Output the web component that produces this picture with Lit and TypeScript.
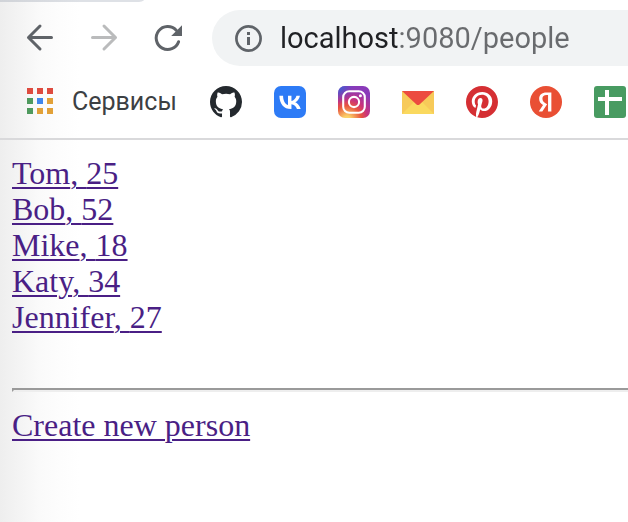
import { LitElement, html, css, svg } from "lit";
import { customElement, property } from "lit/decorators.js";

interface Bookmark {
  name: string;
  icon: unknown;
}

interface Person {
  name: string;
  age: number;
}

const backIcon = svg`<path d="M27.5 15.5H4.5M16 4L4.5 15.5L16 27" fill="none" stroke="currentColor" stroke-width="3" stroke-linecap="round" stroke-linejoin="round"/>`;
const forwardIcon = svg`<path d="M4.5 15.5H27.5M16 4L27.5 15.5L16 27" fill="none" stroke="currentColor" stroke-width="3" stroke-linecap="round" stroke-linejoin="round"/>`;
const reloadIcon = svg`
  <path d="M24.2 8.2A11.5 11.5 0 1 0 26.6 19.7" fill="none" stroke="currentColor" stroke-width="3" stroke-linecap="round"/>
  <path d="M30 3.2V14H19.2Z" fill="currentColor"/>`;
const infoIcon = svg`
  <circle cx="16.5" cy="16.5" r="12.1" fill="none" stroke="currentColor" stroke-width="2.7"/>
  <path d="M15 10h3v3h-3zM15 15h3v8h-3z" fill="currentColor"/>`;
const appsIcon = svg`
  <path d="M3 2h6v6H3zM13 2h6v6h-6zM23 2h6v6h-6z" fill="#de4b3f"/>
  <path d="M3 12h6v6H3zM3 22h6v6H3z" fill="#4f9a5e"/>
  <path d="M13 12h6v6h-6z" fill="#4086ec"/>
  <path d="M23 12h6v6h-6zM13 22h6v6h-6zM23 22h6v6h-6z" fill="#e2a138"/>`;

const bookmarks: Bookmark[] = [
  {
    name: "GitHub",
    icon: svg`<path transform="scale(2)" fill="#24292e" fill-rule="evenodd" d="M8 0C3.58 0 0 3.58 0 8c0 3.54 2.29 6.53 5.47 7.59.4.07.55-.17.55-.38 0-.19-.01-.82-.01-1.49-2.01.37-2.53-.49-2.69-.94-.09-.23-.48-.94-.82-1.13-.28-.15-.68-.52-.01-.53.63-.01 1.08.58 1.23.82.72 1.21 1.87.87 2.33.66.07-.52.28-.87.51-1.07-1.78-.2-3.64-.89-3.64-3.95 0-.87.31-1.59.82-2.15-.08-.2-.36-1.02.08-2.12 0 0 .67-.21 2.2.82.64-.18 1.32-.27 2-.27s1.36.09 2 .27c1.53-1.04 2.2-.82 2.2-.82.44 1.1.16 1.92.08 2.12.51.56.82 1.27.82 2.15 0 3.07-1.87 3.75-3.65 3.95.29.25.54.73.54 1.48 0 1.07-.01 1.93-.01 2.2 0 .21.15.46.55.38A8.01 8.01 0 0 0 16 8c0-4.42-3.58-8-8-8z"/>`,
  },
  {
    name: "VK",
    icon: svg`
      <rect width="32" height="32" rx="7" fill="#2d7bf6"/>
      <path transform="scale(.6667)" fill="#fff" d="M25.54 34.58c-10.94 0-17.18-7.5-17.44-19.98h5.48c.18 9.16 4.22 13.04 7.42 13.84V14.6h5.16v7.9c3.16-.34 6.48-3.94 7.6-7.9h5.16c-.86 4.88-4.46 8.48-7.02 9.96 2.56 1.2 6.66 4.34 8.22 10.02h-5.68c-1.22-3.8-4.26-6.74-8.28-7.14v7.14z"/>`,
  },
  {
    name: "Instagram",
    icon: svg`
      <defs>
        <radialGradient id="warm" gradientUnits="userSpaceOnUse" cx="9" cy="34" r="32">
          <stop offset="0" stop-color="#fbd872"/>
          <stop offset=".12" stop-color="#fbd068"/>
          <stop offset=".45" stop-color="#e8553f"/>
          <stop offset=".65" stop-color="#c9337c"/>
          <stop offset="1" stop-color="#8a3ab9"/>
        </radialGradient>
        <radialGradient id="cool" gradientUnits="userSpaceOnUse" cx="0" cy="0" r="18">
          <stop offset="0" stop-color="#3a66d8"/>
          <stop offset=".3" stop-color="#4b58cc" stop-opacity=".85"/>
          <stop offset="1" stop-color="#7a3fc0" stop-opacity="0"/>
        </radialGradient>
      </defs>
      <rect width="32" height="32" rx="7" fill="url(#warm)"/>
      <rect width="32" height="32" rx="7" fill="url(#cool)"/>
      <g fill="none" stroke="#fff" stroke-width="2.1">
        <rect x="5.2" y="5.2" width="21.6" height="21.6" rx="6"/>
        <circle cx="16" cy="16" r="5.1"/>
      </g>
      <circle cx="22.4" cy="9.7" r="1.5" fill="#fff"/>`,
  },
  {
    name: "Mail",
    icon: svg`
      <path d="M0 5h32v23H0z" fill="#f7ca59"/>
      <path d="M0 28L16 12L32 28z" fill="#fad95f"/>
      <path d="M0 5h32L17.5 18.4q-1.5 1.4-3 0z" fill="#ec4b3f"/>`,
  },
  {
    name: "Pinterest",
    icon: svg`
      <circle cx="16" cy="16" r="15" fill="#fff"/>
      <path transform="scale(1.3333)" fill="#d52f33" d="M12 0C5.373 0 0 5.372 0 12c0 5.084 3.163 9.426 7.627 11.174-.105-.949-.2-2.405.042-3.441.218-.937 1.407-5.965 1.407-5.965s-.359-.719-.359-1.782c0-1.668.967-2.914 2.171-2.914 1.023 0 1.518.769 1.518 1.69 0 1.029-.655 2.568-.994 3.995-.283 1.194.599 2.169 1.777 2.169 2.133 0 3.772-2.249 3.772-5.495 0-2.873-2.064-4.882-5.012-4.882-3.414 0-5.418 2.561-5.418 5.207 0 1.031.397 2.138.893 2.738a.36.36 0 0 1 .083.345l-.333 1.36c-.053.22-.174.267-.402.161-1.499-.698-2.436-2.889-2.436-4.649 0-3.785 2.75-7.262 7.929-7.262 4.163 0 7.398 2.967 7.398 6.931 0 4.136-2.607 7.464-6.227 7.464-1.216 0-2.359-.631-2.75-1.378l-.748 2.853c-.271 1.043-1.002 2.35-1.492 3.146C9.57 23.812 10.763 24 12 24c6.627 0 12-5.373 12-12 0-6.628-5.373-12-12-12z"/>`,
  },
  {
    name: "Yandex",
    icon: svg`
      <circle cx="16" cy="16" r="16" fill="#e94f34"/>
      <path transform="translate(-3.26 -3.2) scale(1.6)" fill="#fff" d="M13.32 7.666h-.924c-1.694 0-2.585.858-2.585 2.123 0 1.43.616 2.1 1.881 2.959l1.045.704-3.003 4.487H7.49l2.695-4.014c-1.55-1.111-2.42-2.19-2.42-4.015 0-2.288 1.595-3.85 4.62-3.85h3.003v11.868H13.32V7.666z"/>`,
  },
  {
    name: "Sheets",
    icon: svg`
      <rect width="32" height="32" rx="3" fill="#489b61"/>
      <path d="M11 4h4v7h13v4H15v14h-4V15H4v-4h7z" fill="#fff"/>`,
  },
];

const people: Person[] = [
  { name: "Tom", age: 25 },
  { name: "Bob", age: 52 },
  { name: "Mike", age: 18 },
  { name: "Katy", age: 34 },
  { name: "Jennifer", age: 27 },
];

const glyph = (content: unknown) =>
  html`<svg class="glyph" viewBox="0 0 32 32" aria-hidden="true">${content}</svg>`;

@customElement("browser-toolbar")
class BrowserToolbar extends LitElement {
  static styles = css`
    :host {
      display: block;
      font-family: Roboto, "Liberation Sans", sans-serif;
    }
    .glyph {
      display: block;
      flex: none;
      width: 32px;
      height: 32px;
    }
    .tab-edge {
      width: 144px;
      height: 2px;
      background: linear-gradient(90deg, #d0d3d8, #dee1e6 80px);
      border-bottom-right-radius: 8px 2px;
    }
    .nav {
      display: flex;
      align-items: center;
      gap: 28px;
      padding: 8px 0 19px 24px;
    }
    .tools {
      display: flex;
      gap: 32px;
    }
    .tool {
      flex: none;
      padding: 0;
      border: 0;
      background: none;
      color: #5f6368;
    }
    .tool:disabled {
      color: #babbbc;
    }
    .address {
      flex: 1;
      min-width: 0;
      display: flex;
      align-items: center;
      gap: 16px;
      padding: 8px 0 8px 20px;
      border-radius: 28px 0 0 28px;
      background: #f1f3f4;
      color: #5f6368;
    }
    .url {
      flex: 1;
      min-width: 0;
      height: 40px;
      padding: 0;
      border: 0;
      outline: 0;
      font: 29px/40px Roboto, "Liberation Sans", sans-serif;
      color: transparent;
      caret-color: #202124;
      background: linear-gradient(90deg, #202124 119px, #696b6e 119px);
      -webkit-background-clip: text;
      background-clip: text;
    }
    .bookmarks {
      display: flex;
      align-items: center;
      gap: 32px;
      padding: 0 0 19px 24px;
      overflow: hidden;
      border-bottom: 2px solid #d9d9db;
    }
    .apps {
      flex: none;
      display: flex;
      align-items: center;
      gap: 16px;
      min-width: 154px;
      color: #3c4043;
      font-size: 25px;
      line-height: 34px;
      text-decoration: none;
    }
    .bookmark {
      flex: none;
    }
  `;

  @property() url = "";

  render() {
    return html`
      <div class="tab-edge"></div>
      <div class="nav">
        <div class="tools">
          <button class="tool" aria-label="Back">${glyph(backIcon)}</button>
          <button class="tool" aria-label="Forward" disabled>${glyph(forwardIcon)}</button>
          <button class="tool" aria-label="Reload">${glyph(reloadIcon)}</button>
        </div>
        <label class="address">
          ${glyph(infoIcon)}
          <input class="url" type="text" aria-label="Address" spellcheck="false" .value=${this.url} />
        </label>
      </div>
      <nav class="bookmarks">
        <a class="apps" href="#apps">${glyph(appsIcon)}<span>Сервисы</span></a>
        ${bookmarks.map(
          (b) => html`<a class="bookmark" href="#${b.name}" aria-label=${b.name}>${glyph(b.icon)}</a>`
        )}
      </nav>
    `;
  }
}

@customElement("people-page")
class PeoplePage extends LitElement {
  static styles = css`
    :host {
      display: block;
      padding: 15px 0 16px 12px;
      font: 32px/36px "Liberation Serif", serif;
    }
    .people {
      margin: 0;
      padding: 0 0 37px;
      list-style: none;
    }
    .link {
      color: #4a1f85;
      text-decoration-thickness: 2px;
      text-underline-offset: 3px;
    }
    .rule {
      margin: 16px 0 15px;
      border: 2px solid;
      border-color: #9a9a9a #eeeeee #eeeeee #9a9a9a;
      border-right: 0;
    }
  `;

  render() {
    return html`
      <ul class="people">
        ${people.map(
          (p) => html`<li><a class="link" href="#${p.name}">${p.name}, ${p.age}</a></li>`
        )}
      </ul>
      <hr class="rule" />
      <a class="link" href="#new">Create new person</a>
    `;
  }
}

@customElement("app-root")
class AppRoot extends LitElement {
  static styles = css`
    :host {
      display: block;
      min-height: 100vh;
      background: linear-gradient(90deg, #eeeeee, #f4f4f4 20px, #fafafa 40px, #fdfdfd 60px, #ffffff 80px);
    }
  `;

  render() {
    return html`
      <browser-toolbar url="localhost:9080/people"></browser-toolbar>
      <people-page></people-page>
    `;
  }
}
